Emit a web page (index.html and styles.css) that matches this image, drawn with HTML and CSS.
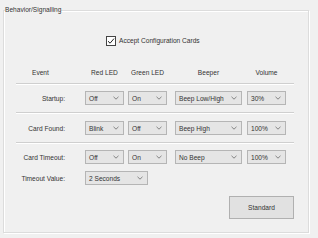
FILE: index.html
```html
<!DOCTYPE html>
<html lang="en">
<head>
    <meta charset="UTF-8">
    <title>Behavior/Signalling</title>
    <link rel="stylesheet" href="styles.css">
</head>
<body>
    <fieldset class="group">
        <legend>Behavior/Signalling</legend>

        <div class="check-row">
            <span class="checkbox">
                <svg width="8" height="8" viewBox="0 0 8 8"><path d="M1 4.2 L3.1 6.2 L7 1.6" fill="none" stroke="#222" stroke-width="1"/></svg>
            </span>
            <span>Accept Configuration Cards</span>
        </div>

        <div class="grid head">
            <div class="event">Event</div>
            <div class="hd w-sm">Red LED</div>
            <div class="hd w-sm">Green LED</div>
            <div class="hd w-lg">Beeper</div>
            <div class="hd w-sm">Volume</div>
        </div>
        <div class="sep"></div>

        <!-- one row per event -->
        <div class="grid row r1">
            <div class="label">Startup:</div>
            <div class="combo w-sm">Off</div>
            <div class="combo w-sm">On</div>
            <div class="combo w-lg">Beep Low/High</div>
            <div class="combo w-sm">30%</div>
        </div>
        <div class="sep s2"></div>

        <div class="grid row r2">
            <div class="label">Card Found:</div>
            <div class="combo w-sm">Blink</div>
            <div class="combo w-sm">Off</div>
            <div class="combo w-lg">Beep High</div>
            <div class="combo w-sm">100%</div>
        </div>
        <div class="sep s2"></div>

        <div class="grid row r3">
            <div class="label">Card Timeout:</div>
            <div class="combo w-sm">Off</div>
            <div class="combo w-sm">On</div>
            <div class="combo w-lg">No Beep</div>
            <div class="combo w-sm">100%</div>
        </div>

        <div class="grid row r4">
            <div class="label">Timeout Value:</div>
            <div class="combo w-xl">2 Seconds</div>
        </div>

        <div class="actions">
            <button class="btn">Standard</button>
        </div>
    </fieldset>

    <script>
        // chevron for every combo box
        document.querySelectorAll('.combo').forEach(function (c) {
            c.insertAdjacentHTML('beforeend',
                '<svg class="chev" width="6" height="4" viewBox="0 0 6 4"><path d="M0.5 0.8 L3 3.2 L5.5 0.8" fill="none" stroke="#777" stroke-width="0.9"/></svg>');
        });
    </script>
</body>
</html>
```

FILE: styles.css
```css
body {
    margin: 0;
    width: 318px;
    height: 238px;
    background: #f0f0f0;
    font-family: "Liberation Sans", Arial, sans-serif;
    font-size: 6.6px;
    color: #333;
    overflow: hidden;
}

.group {
    margin: 6px 9px 0 3px;
    padding: 0 0 13px 0;
    border: 1px solid #dcdcdc;
    box-shadow: inset 1px 1px 0 #fff, 1px 1px 0 #fff;
    height: 212px;
    box-sizing: content-box;
}

.group legend {
    padding: 0;
    margin-left: 1px;
    line-height: 8px;
}

.check-row {
    display: flex;
    align-items: center;
    gap: 3px;
    margin: 21px 0 0 102px;
    height: 11px;
}

.checkbox {
    width: 8px;
    height: 8px;
    border: 1px solid #444;
    background: #fff;
    display: flex;
    align-items: center;
    justify-content: center;
}

.grid {
    display: grid;
    grid-template-columns: 81px 43px 47px 72px 39px;
    align-items: center;
}

.head {
    margin-top: 20px;
    height: 12px;
}

.event {
    padding-left: 28px;
}

.hd {
    text-align: center;
}

.w-sm { width: 39px; }
.w-lg { width: 67px; }
.w-xl { width: 63px; grid-column: span 2; }

.sep {
    margin: 5px 0 0 12px;
    width: 278px;
    height: 0;
    border-top: 1px solid #cfcfcf;
    border-bottom: 1px solid #fff;
}

.s2 {
    margin-top: 7px;
}

.row {
    height: 14px;
}

.r1 { margin-top: 6px; }
.r2 { margin-top: 7px; }
.r3 { margin-top: 6px; }
.r4 { margin-top: 7px; }

.label {
    text-align: right;
    padding-right: 20px;
}

.combo {
    height: 14px;
    box-sizing: border-box;
    border: 1px solid #b5b5b5;
    background: #e5e5e5;
    padding-left: 3px;
    display: flex;
    align-items: center;
    justify-content: space-between;
}

.chev {
    margin-right: 4px;
}

.actions {
    display: flex;
    justify-content: flex-end;
    margin: 11px 14px 0 0;
}

.btn {
    width: 65px;
    height: 23px;
    border: 1px solid #b0b0b0;
    background: #e1e1e1;
    font-family: inherit;
    font-size: 6.6px;
    color: #333;
    padding: 0;
}
```
